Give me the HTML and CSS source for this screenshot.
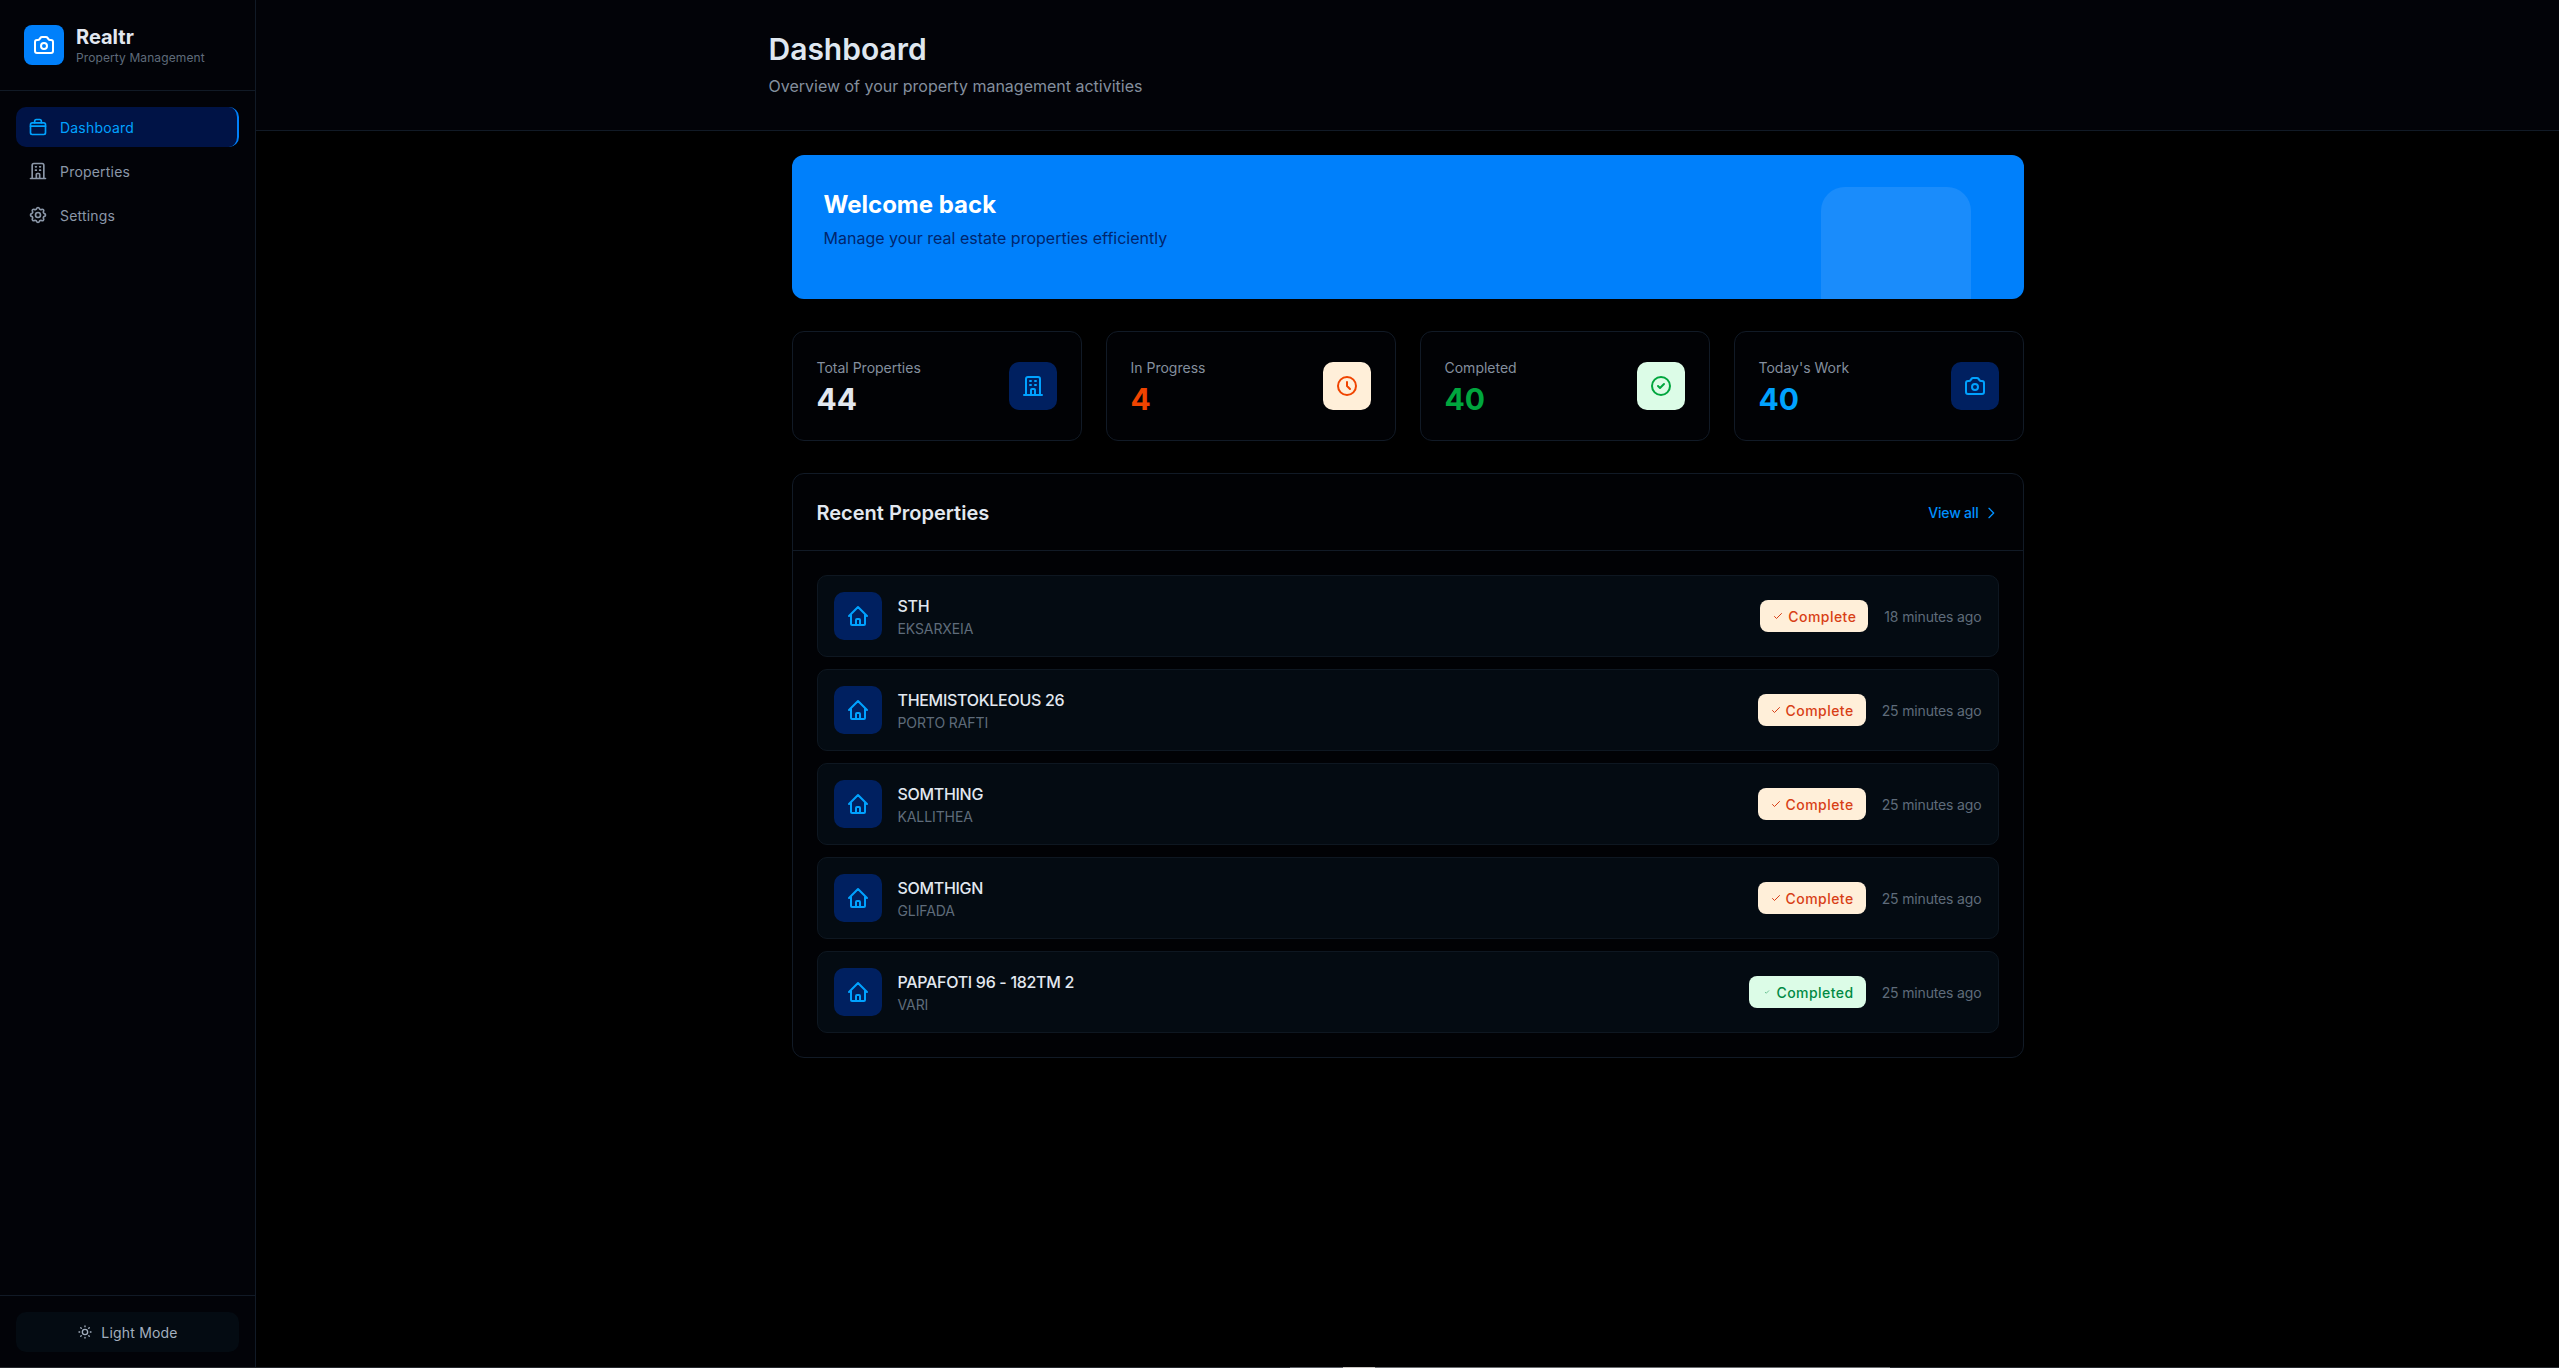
FILE: index.html
```html
<!DOCTYPE html>
<html lang="en">
  <head>
    <meta charset="UTF-8" />
    <meta name="viewport" content="width=device-width, initial-scale=1.0" />
    <title>Realtr Dashboard</title>
    <link rel="stylesheet" href="styles.css">
  </head>
  <body>
    <svg class="sprite" width="0" height="0">
      <symbol id="i-camera" viewBox="0 0 24 24">
        <path d="M3 9a2 2 0 012-2h.93a2 2 0 001.664-.89l.812-1.22A2 2 0 0110.07 4h3.86a2 2 0 011.664.89l.812 1.22A2 2 0 0018.07 7H19a2 2 0 012 2v9a2 2 0 01-2 2H5a2 2 0 01-2-2V9z" />
        <path d="M15 13a3 3 0 11-6 0 3 3 0 016 0z" />
      </symbol>
      <symbol id="i-briefcase" viewBox="0 0 24 24">
        <path d="M5 7h14a2 2 0 012 2v10a2 2 0 01-2 2H5a2 2 0 01-2-2V9a2 2 0 012-2z" />
        <path d="M8 7V5a2 2 0 012-2h4a2 2 0 012 2v2" />
        <path d="M3 11h18" />
      </symbol>
      <symbol id="i-building" viewBox="0 0 24 24">
        <path d="M19 21V5a2 2 0 00-2-2H7a2 2 0 00-2 2v16m14 0h2m-2 0h-5m-9 0H3m2 0h5M9 7h1m-1 4h1m4-4h1m-1 4h1m-5 10v-5a1 1 0 011-1h2a1 1 0 011 1v5m-4 0h4" />
      </symbol>
      <symbol id="i-gear" viewBox="0 0 24 24">
        <path d="M10.325 4.317c.426-1.756 2.924-1.756 3.35 0a1.724 1.724 0 002.573 1.066c1.543-.94 3.31.826 2.37 2.37a1.724 1.724 0 001.065 2.572c1.756.426 1.756 2.924 0 3.35a1.724 1.724 0 00-1.066 2.573c.94 1.543-.826 3.31-2.37 2.37a1.724 1.724 0 00-2.572 1.065c-.426 1.756-2.924 1.756-3.35 0a1.724 1.724 0 00-2.573-1.066c-1.543.94-3.31-.826-2.37-2.37a1.724 1.724 0 00-1.065-2.572c-1.756-.426-1.756-2.924 0-3.35a1.724 1.724 0 001.066-2.573c-.94-1.543.826-3.31 2.37-2.37.996.608 2.296.07 2.572-1.065z" />
        <path d="M15 12a3 3 0 11-6 0 3 3 0 016 0z" />
      </symbol>
      <symbol id="i-clock" viewBox="0 0 24 24">
        <path d="M12 8v4l3 3m6-3a9 9 0 11-18 0 9 9 0 0118 0z" />
      </symbol>
      <symbol id="i-check-circle" viewBox="0 0 24 24">
        <path d="M9 12l2 2 4-4m6 2a9 9 0 11-18 0 9 9 0 0118 0z" />
      </symbol>
      <symbol id="i-home" viewBox="0 0 24 24">
        <path d="M3 12l2-2m0 0l7-7 7 7M5 10v10a1 1 0 001 1h3m10-11l2 2m-2-2v10a1 1 0 01-1 1h-3m-6 0a1 1 0 001-1v-4a1 1 0 011-1h2a1 1 0 011 1v4a1 1 0 001 1m-6 0h6" />
      </symbol>
      <symbol id="i-chevron" viewBox="0 0 24 24">
        <path d="M9 5l7 7-7 7" />
      </symbol>
      <symbol id="i-check" viewBox="0 0 24 24">
        <path d="M5 13l4 4L19 7" />
      </symbol>
      <symbol id="i-sun" viewBox="0 0 24 24">
        <path d="M12 3v1m0 16v1m9-9h-1M4 12H3m15.364 6.364l-.707-.707M6.343 6.343l-.707-.707m12.728 0l-.707.707M6.343 17.657l-.707.707M16 12a4 4 0 11-8 0 4 4 0 018 0z" />
      </symbol>
    </svg>

    <div class="app">
      <aside class="sidebar">
        <div class="brand">
          <div class="brand-logo"><svg class="icon icon-24"><use href="#i-camera" /></svg></div>
          <div>
            <div class="brand-name">Realtr</div>
            <div class="brand-sub">Property Management</div>
          </div>
        </div>

        <nav class="nav">
          <a class="nav-item active"><svg class="icon icon-20"><use href="#i-briefcase" /></svg>Dashboard</a>
          <a class="nav-item"><svg class="icon icon-20"><use href="#i-building" /></svg>Properties</a>
          <a class="nav-item"><svg class="icon icon-20"><use href="#i-gear" /></svg>Settings</a>
        </nav>

        <div class="sidebar-foot">
          <button class="mode-button"><svg class="icon icon-16"><use href="#i-sun" /></svg>Light Mode</button>
        </div>
      </aside>

      <div class="content">
        <header class="topbar">
          <div class="topbar-inner">
            <h1>Dashboard</h1>
            <p>Overview of your property management activities</p>
          </div>
        </header>

        <main class="main">
          <section class="welcome">
            <h2>Welcome back</h2>
            <p>Manage your real estate properties efficiently</p>
            <div class="welcome-shape"></div>
          </section>

          <section class="stats">
            <div class="stat">
              <div class="stat-text">
                <div class="stat-label">Total Properties</div>
                <div class="stat-value">44</div>
              </div>
              <div class="stat-icon tone-blue"><svg class="icon icon-24"><use href="#i-building" /></svg></div>
            </div>
            <div class="stat">
              <div class="stat-text">
                <div class="stat-label">In Progress</div>
                <div class="stat-value text-orange">4</div>
              </div>
              <div class="stat-icon tone-orange"><svg class="icon icon-24"><use href="#i-clock" /></svg></div>
            </div>
            <div class="stat">
              <div class="stat-text">
                <div class="stat-label">Completed</div>
                <div class="stat-value text-green">40</div>
              </div>
              <div class="stat-icon tone-green"><svg class="icon icon-24"><use href="#i-check-circle" /></svg></div>
            </div>
            <div class="stat">
              <div class="stat-text">
                <div class="stat-label">Today's Work</div>
                <div class="stat-value text-blue">40</div>
              </div>
              <div class="stat-icon tone-blue"><svg class="icon icon-24"><use href="#i-camera" /></svg></div>
            </div>
          </section>

          <section class="recent">
            <div class="recent-head">
              <h3>Recent Properties</h3>
              <a class="view-all">View all<svg class="icon icon-16"><use href="#i-chevron" /></svg></a>
            </div>
            <div class="recent-list">
              <div class="row">
                <div class="row-icon"><svg class="icon icon-24"><use href="#i-home" /></svg></div>
                <div class="row-text">
                  <div class="row-title">STH</div>
                  <div class="row-sub">EKSARXEIA</div>
                </div>
                <span class="badge badge-orange"><svg class="icon badge-check"><use href="#i-check" /></svg>Complete</span>
                <span class="row-time">18 minutes ago</span>
              </div>
              <div class="row">
                <div class="row-icon"><svg class="icon icon-24"><use href="#i-home" /></svg></div>
                <div class="row-text">
                  <div class="row-title">THEMISTOKLEOUS 26</div>
                  <div class="row-sub">PORTO RAFTI</div>
                </div>
                <span class="badge badge-orange"><svg class="icon badge-check"><use href="#i-check" /></svg>Complete</span>
                <span class="row-time">25 minutes ago</span>
              </div>
              <div class="row">
                <div class="row-icon"><svg class="icon icon-24"><use href="#i-home" /></svg></div>
                <div class="row-text">
                  <div class="row-title">SOMTHING</div>
                  <div class="row-sub">KALLITHEA</div>
                </div>
                <span class="badge badge-orange"><svg class="icon badge-check"><use href="#i-check" /></svg>Complete</span>
                <span class="row-time">25 minutes ago</span>
              </div>
              <div class="row">
                <div class="row-icon"><svg class="icon icon-24"><use href="#i-home" /></svg></div>
                <div class="row-text">
                  <div class="row-title">SOMTHIGN</div>
                  <div class="row-sub">GLIFADA</div>
                </div>
                <span class="badge badge-orange"><svg class="icon badge-check"><use href="#i-check" /></svg>Complete</span>
                <span class="row-time">25 minutes ago</span>
              </div>
              <div class="row">
                <div class="row-icon"><svg class="icon icon-24"><use href="#i-home" /></svg></div>
                <div class="row-text">
                  <div class="row-title">PAPAFOTI 96 - 182TM 2</div>
                  <div class="row-sub">VARI</div>
                </div>
                <span class="badge badge-green"><svg class="icon badge-check small"><use href="#i-check" /></svg>Completed</span>
                <span class="row-time">25 minutes ago</span>
              </div>
            </div>
          </section>
        </main>
      </div>
    </div>

    <div class="bottom-edge"></div>
  </body>
</html>
```

FILE: styles.css
```css
* {
  box-sizing: border-box;
}

html,
body {
  height: 100%;
  margin: 0;
}

body {
  font-family: "Inter", "Noto Sans", sans-serif;
  background-color: #000;
  color: #e2e8f0;
  overflow: hidden;
}

h1,
h2,
h3,
p {
  margin: 0;
}

.sprite {
  position: absolute;
}

.icon {
  fill: none;
  stroke: currentColor;
  stroke-width: 2;
  stroke-linecap: round;
  stroke-linejoin: round;
  flex-shrink: 0;
}

.icon-24 {
  width: 24px;
  height: 24px;
}

.icon-20 {
  width: 20px;
  height: 20px;
}

.icon-16 {
  width: 16px;
  height: 16px;
}

.app {
  display: flex;
  height: 100%;
}

/* sidebar */
.sidebar {
  width: 256px;
  flex-shrink: 0;
  display: flex;
  flex-direction: column;
  background-color: #020308;
  border-right: 1px solid #111a26;
}

.brand {
  display: flex;
  align-items: center;
  gap: 12px;
  height: 91px;
  padding: 0 24px;
  border-bottom: 1px solid #111a26;
}

.brand-logo {
  width: 40px;
  height: 40px;
  border-radius: 8px;
  display: flex;
  align-items: center;
  justify-content: center;
  background-color: #0080fb;
  color: #fff;
}

.brand-name {
  font-size: 20px;
  line-height: 24px;
  font-weight: 700;
  color: #e2e8f0;
}

.brand-sub {
  margin-top: 1px;
  font-size: 12px;
  line-height: 16px;
  letter-spacing: 0.1px;
  color: #5f6b7a;
}

.nav {
  flex: 1;
  padding: 16px;
  display: flex;
  flex-direction: column;
  gap: 4px;
}

.nav-item {
  height: 40px;
  display: flex;
  align-items: center;
  gap: 12px;
  padding: 0 12px;
  border-radius: 10px;
  font-size: 14px;
  letter-spacing: 0.2px;
  color: #8b97a8;
}

.nav-item.active {
  background-color: #001346;
  color: #00a2ff;
  border-right: 2px solid #0080fb;
}

.sidebar-foot {
  padding: 16px;
  border-top: 1px solid #111a26;
}

.mode-button {
  width: 100%;
  height: 40px;
  display: flex;
  align-items: center;
  justify-content: center;
  gap: 8px;
  border: none;
  border-radius: 10px;
  background-color: #040b12;
  color: #a3afbf;
  font-family: inherit;
  font-size: 14px;
  letter-spacing: 0.2px;
}

/* header */
.content {
  flex: 1;
  min-width: 0;
}

.topbar {
  height: 131px;
  background-color: #020308;
  border-bottom: 1px solid #111a26;
}

.topbar-inner {
  max-width: 1280px;
  margin: 0 auto;
  padding: 29px 0 0 1px;
}

.topbar h1 {
  font-size: 30px;
  line-height: 40px;
  font-weight: 600;
  color: #dfe7f0;
}

.topbar p {
  margin-top: 5px;
  font-size: 16px;
  line-height: 24px;
  color: #848f9e;
}

.main {
  max-width: 1280px;
  margin: 0 auto;
  padding: 24px;
}

/* welcome banner */
.welcome {
  position: relative;
  height: 144px;
  padding: 34px 32px 0;
  border-radius: 12px;
  background-color: #0080fb;
  overflow: hidden;
}

.welcome h2 {
  font-size: 24px;
  line-height: 32px;
  font-weight: 700;
  color: #fff;
}

.welcome p {
  margin-top: 5px;
  font-size: 16px;
  line-height: 24px;
  color: #00266e;
}

.welcome-shape {
  position: absolute;
  right: 53px;
  bottom: 0;
  width: 150px;
  height: 112px;
  border-radius: 24px 24px 0 0;
  background-color: #1a8cfb;
}

/* stat cards */
.stats {
  display: grid;
  grid-template-columns: repeat(4, 1fr);
  gap: 24px;
  margin-top: 32px;
}

.stat {
  height: 110px;
  padding: 24px;
  display: flex;
  align-items: center;
  justify-content: space-between;
  border: 1px solid #111a26;
  border-radius: 12px;
  background-color: #010205;
}

.stat-text {
  padding-top: 4px;
}

.stat-label {
  font-size: 14px;
  line-height: 20px;
  color: #848f9e;
}

.stat-value {
  margin-top: 1px;
  font-size: 30px;
  line-height: 40px;
  font-weight: 700;
  color: #e2e8f0;
}

.stat-icon {
  width: 48px;
  height: 48px;
  border-radius: 10px;
  display: flex;
  align-items: center;
  justify-content: center;
}

.tone-blue {
  background-color: #002060;
  color: #00a2ff;
}

.tone-orange {
  background-color: #ffefd9;
  color: #f04400;
}

.tone-green {
  background-color: #dcfce7;
  color: #00a63e;
}

.text-orange {
  color: #f04400;
}

.text-green {
  color: #00a63e;
}

.text-blue {
  color: #00a2ff;
}

/* recent properties */
.recent {
  margin-top: 32px;
  border: 1px solid #111a26;
  border-radius: 12px;
  background-color: #010205;
}

.recent-head {
  height: 77px;
  padding: 1px 24px 0;
  display: flex;
  align-items: center;
  justify-content: space-between;
  border-bottom: 1px solid #111a26;
}

.recent-head h3 {
  font-size: 20px;
  line-height: 28px;
  font-weight: 600;
  color: #e2e8f0;
}

.view-all {
  display: flex;
  align-items: center;
  gap: 4px;
  font-size: 14px;
  font-weight: 500;
  letter-spacing: -0.2px;
  color: #0090ff;
}

.recent-list {
  padding: 24px;
  display: flex;
  flex-direction: column;
  gap: 12px;
}

.row {
  height: 82px;
  padding: 0 16px;
  display: flex;
  align-items: center;
  gap: 16px;
  border: 1px solid #0e1721;
  border-radius: 10px;
  background-color: #040b12;
}

.row-icon {
  width: 48px;
  height: 48px;
  border-radius: 10px;
  display: flex;
  align-items: center;
  justify-content: center;
  background-color: #002060;
  color: #00a2ff;
}

.row-text {
  flex: 1;
  min-width: 0;
}

.row-title {
  font-size: 16px;
  line-height: 24px;
  font-weight: 500;
  letter-spacing: -0.3px;
  color: #e2e8f0;
}

.row-sub {
  margin-top: 1px;
  font-size: 14px;
  line-height: 20px;
  letter-spacing: -0.1px;
  color: #5f6b7a;
}

.badge {
  height: 32px;
  padding: 0 12px;
  display: flex;
  align-items: center;
  gap: 4px;
  border-radius: 8px;
  font-size: 14px;
  font-weight: 500;
  letter-spacing: 0.45px;
}

.badge-check {
  width: 12px;
  height: 12px;
}

.badge-check.small {
  width: 6px;
  height: 6px;
  margin: 0 3px;
}

.badge-orange {
  background-color: #ffefd9;
  color: #d83f16;
}

.badge-green {
  background-color: #dcfce7;
  color: #008a44;
}

.row-time {
  font-size: 14px;
  letter-spacing: -0.15px;
  color: #5f6b7a;
}

/* sliver of another window along the bottom edge */
.bottom-edge {
  position: fixed;
  left: 0;
  right: 0;
  bottom: 0;
  height: 1px;
  background: linear-gradient(90deg, #26292e 0 1290px, #5a5d63 1290px 1343px, #c9c6c2 1343px 1375px, #6a6c70 1375px 1890px, #26292e 1890px);
}
```
